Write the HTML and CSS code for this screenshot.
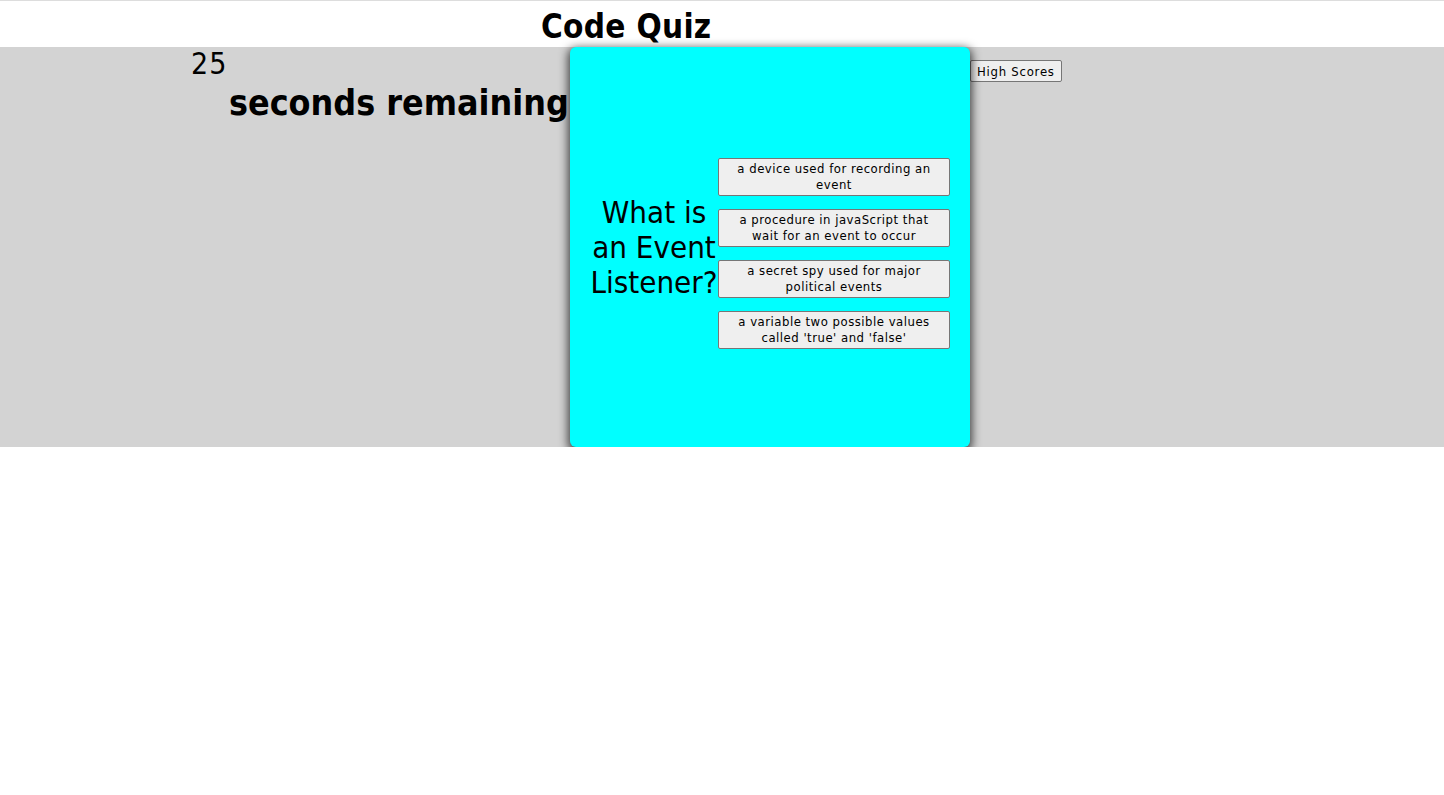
FILE: index.html
```html
<!DOCTYPE html>
<html>
<head>
<meta charset="utf-8">
<link rel="stylesheet" href="styles.css">
</head>
<body>
<header class="top">
  <h1 class="title">Code Quiz</h1>
</header>
<main class="band">
  <div class="timer">
    <div class="count">25</div>
    <h2 class="label">seconds remaining</h2>
  </div>
  <section class="card">
    <div class="question">What is an Event Listener?</div>
    <div class="answers">
      <button class="answer">a device used for recording an event</button>
      <button class="answer">a procedure in javaScript that wait for an event to occur</button>
      <button class="answer">a secret spy used for major political events</button>
      <button class="answer">a variable two possible values called 'true' and 'false'</button>
    </div>
  </section>
  <div class="side">
    <button class="scores">High Scores</button>
  </div>
</main>
</body>
</html>
```
FILE: styles.css
```css
html, body {
  margin: 0;
  padding: 0;
  background: #fff;
  font-family: "DejaVu Sans", Verdana, sans-serif;
  font-stretch: condensed;
  color: #000;
}
body {
  border-top: 1px solid #dddddd;
}
.top {
  height: 46px;
  display: flex;
  align-items: center;
  padding-left: 541px;
}
.title {
  margin: 0;
  font-size: 33px;
  font-weight: bold;
  letter-spacing: 0.3px;
  line-height: 46px;
  padding-top: 6px;
}
.band {
  display: flex;
  align-items: flex-start;
  height: 400px;
  background: #d3d3d3;
}
.timer {
  width: 570px;
  flex: none;
}
.count {
  padding-left: 191px;
  font-size: 30px;
  line-height: 34px;
  letter-spacing: 1px;
}
.label {
  margin: 0;
  padding-left: 229px;
  font-size: 35.5px;
  font-weight: bold;
  line-height: 44px;
  white-space: nowrap;
}
.card {
  position: relative;
  z-index: 1;
  width: 400px;
  height: 400px;
  flex: none;
  box-sizing: border-box;
  padding: 0 20px;
  background: #00ffff;
  border-radius: 6px;
  box-shadow: 0 3px 10px 2px rgba(0, 0, 0, 0.7);
  display: flex;
  align-items: center;
}
.question {
  width: 128px;
  flex: none;
  text-align: center;
  font-size: 31px;
  line-height: 35px;
}
.answers {
  width: 232px;
  flex: none;
  display: flex;
  flex-direction: column;
}
.answer {
  margin-top: 13px;
  height: 38px;
  padding: 1px 6px;
  font-family: "DejaVu Sans", Verdana, sans-serif;
  font-stretch: condensed;
  font-size: 13px;
  letter-spacing: 0.5px;
  line-height: 16px;
  background: #efefef;
  border: 1px solid #767676;
  border-radius: 2px;
  color: #000;
}
.side {
  padding-top: 13px;
}
.scores {
  height: 22px;
  padding: 1px 6px;
  font-family: "DejaVu Sans", Verdana, sans-serif;
  font-stretch: condensed;
  font-size: 13px;
  letter-spacing: 0.75px;
  background: #efefef;
  border: 1px solid #767676;
  border-radius: 2px;
  color: #000;
}
```
